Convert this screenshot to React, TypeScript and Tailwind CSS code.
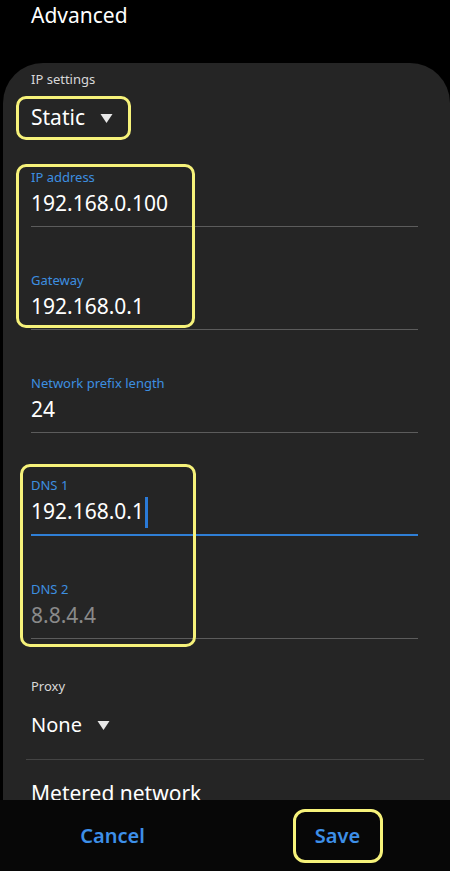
import React from 'react';

const font = { fontFamily: '"Noto Sans", Roboto, sans-serif' };

const Caret: React.FC = () => (
  <svg width="13" height="11" viewBox="0 0 13 11" className="ml-[15px]">
    <path d="M0.5 1 L12.5 1 L6.5 10 Z" fill="#e8e8e8" />
  </svg>
);

type FieldProps = {
  label: string;
  value: string;
  muted?: boolean;
  focused?: boolean;
  className?: string;
};

const Field: React.FC<FieldProps> = ({ label, value, muted, focused, className }) => (
  <div className={className}>
    <div className="text-[13px] leading-[16px] text-[#3d8fe0]">{label}</div>
    <div
      className={`flex items-center h-[38px] text-[21px] ${muted ? 'text-[#8a8a8a]' : 'text-white'}`}
    >
      <span>{value}</span>
      {focused && <span className="ml-[1px] w-[3px] h-[31px] bg-[#2a7ad8]" />}
    </div>
    <div className={`mt-[3px] ${focused ? 'h-[2px] bg-[#2f7fd6]' : 'h-px bg-[#5c5c5c]'}`} />
  </div>
);

const App: React.FC = () => {
  return (
    <div className="w-[450px] h-[871px] bg-black overflow-hidden flex flex-col" style={font}>
      <div className="h-[63px] shrink-0 pl-[31px] pt-[1px] text-[21px] leading-[28px] text-white">
        Advanced
      </div>

      <div className="flex-1 min-h-0 ml-[3px] bg-[#252525] rounded-t-[40px] overflow-hidden pl-[28px] pr-[32px]">
        <div className="pt-[8px] text-[13px] leading-[16px] text-[#d8d8d8]">IP settings</div>
        <div className="mt-[9px] -ml-[15px] w-[115px] h-[44px] border-[3px] border-[#f6f27a] rounded-[10px] flex items-center pl-[12px] text-[21px] text-white">
          Static
          <Caret />
        </div>

        <div className="relative mt-[29px]">
          <div className="absolute -left-[15px] -top-[5px] w-[179px] h-[164px] border-[3px] border-[#f6f27a] rounded-[10px] pointer-events-none" />
          <Field label="IP address" value="192.168.0.100" />
          <Field label="Gateway" value="192.168.0.1" className="mt-[45px]" />
        </div>

        <Field label="Network prefix length" value="24" className="mt-[45px]" />

        <div className="relative mt-[44px]">
          <div className="absolute -left-[11px] -top-[13px] w-[176px] h-[183px] border-[3px] border-[#f6f27a] rounded-[10px] pointer-events-none" />
          <Field label="DNS 1" value="192.168.0.1" focused />
          <Field label="DNS 2" value="8.8.4.4" muted className="mt-[45px]" />
        </div>

        <div className="mt-[39px] text-[13px] leading-[16px] text-[#d8d8d8]">Proxy</div>
        <div className="mt-[15px] flex items-center h-[32px] text-[20px] text-white">
          None
          <Caret />
        </div>
        <div className="mt-[18px] -ml-[5px] mr-[-6px] h-px bg-[#444]" />
        <div className="mt-[19px] text-[21px] leading-[28px] text-white">Metered network</div>
      </div>

      <div className="h-[71px] shrink-0 bg-[#070707] flex items-center">
        <div className="w-[225px] flex justify-center text-[20px] font-semibold text-[#3d8fe8]">Cancel</div>
        <div className="w-[225px] flex justify-center">
          <div className="w-[90px] h-[54px] border-[3px] border-[#f6f27a] rounded-[12px] flex items-center justify-center text-[20px] font-semibold text-[#3d8fe8]">
            Save
          </div>
        </div>
      </div>
    </div>
  );
};

export default App;
